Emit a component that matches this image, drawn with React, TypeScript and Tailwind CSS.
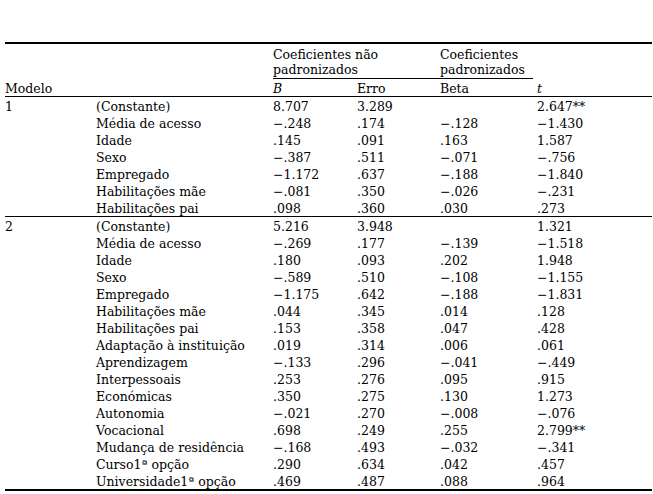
type Row = [string, string, string, string, string];

const modelOne: Row[] = [
  ['(Constante)', '8.707', '3.289', '', '2.647**'],
  ['Média de acesso', '−.248', '.174', '−.128', '−1.430'],
  ['Idade', '.145', '.091', '.163', '1.587'],
  ['Sexo', '−.387', '.511', '−.071', '−.756'],
  ['Empregado', '−1.172', '.637', '−.188', '−1.840'],
  ['Habilitações mãe', '−.081', '.350', '−.026', '−.231'],
  ['Habilitações pai', '.098', '.360', '.030', '.273'],
];

const modelTwo: Row[] = [
  ['(Constante)', '5.216', '3.948', '', '1.321'],
  ['Média de acesso', '−.269', '.177', '−.139', '−1.518'],
  ['Idade', '.180', '.093', '.202', '1.948'],
  ['Sexo', '−.589', '.510', '−.108', '−1.155'],
  ['Empregado', '−1.175', '.642', '−.188', '−1.831'],
  ['Habilitações mãe', '.044', '.345', '.014', '.128'],
  ['Habilitações pai', '.153', '.358', '.047', '.428'],
  ['Adaptação à instituição', '.019', '.314', '.006', '.061'],
  ['Aprendizagem', '−.133', '.296', '−.041', '−.449'],
  ['Interpessoais', '.253', '.276', '.095', '.915'],
  ['Económicas', '.350', '.275', '.130', '1.273'],
  ['Autonomia', '−.021', '.270', '−.008', '−.076'],
  ['Vocacional', '.698', '.249', '.255', '2.799**'],
  ['Mudança de residência', '−.168', '.493', '−.032', '−.341'],
  ['Curso1ª opção', '.290', '.634', '.042', '.457'],
  ['Universidade1ª opção', '.469', '.487', '.088', '.964'],
];

// single-line cell: 17px tall, text sits a little low like the scan
const cell = 'p-0 pt-[3px] leading-[14px] h-[17px] text-left font-normal align-top whitespace-nowrap';

function ModelRows({ id, rows }: { id: string; rows: Row[] }) {
  return (
    <>
      {rows.map((r, i) => (
        <tr key={id + i} className={i === 0 && id === '2' ? 'border-t border-black' : ''}>
          <td className={cell}>{i === 0 ? id : ''}</td>
          <td className={cell}>{r[0]}</td>
          <td className={cell}>{r[1]}</td>
          <td className={cell}>{r[2]}</td>
          <td className={cell}>{r[3]}</td>
          <td className={cell}>{r[4]}</td>
        </tr>
      ))}
    </>
  );
}

export default function App() {
  return (
    <div className="w-[653px] h-[494px] bg-white pt-[42px] pl-[5px] text-black font-['DejaVu_Serif',serif] text-[12.5px] overflow-hidden">
      <table className="w-[647px] table-fixed border-collapse border-t-2 border-b-2 border-black">
        <colgroup>
          <col className="w-[91px]" />
          <col className="w-[177px]" />
          <col className="w-[84px]" />
          <col className="w-[83px]" />
          <col className="w-[97px]" />
          <col />
        </colgroup>
        <thead>
          <tr>
            <th className="p-0" />
            <th className="p-0" />
            <th colSpan={2} className="p-0 text-left font-normal align-bottom">
              <div className="border-b border-black pt-[3px] pb-[1px] leading-[15px]">
                Coeficientes não
                <br />
                padronizados
              </div>
            </th>
            <th className="p-0 text-left font-normal align-bottom">
              <div className="border-b border-black pt-[3px] pb-[1px] leading-[15px] mr-[4px]">
                Coeficientes
                <br />
                padronizados
              </div>
            </th>
            <th className="p-0" />
          </tr>
          <tr className="border-b border-black">
            <th className={cell}>Modelo</th>
            <th className={cell} />
            <th className={cell + ' italic'}>B</th>
            <th className={cell}>Erro</th>
            <th className={cell}>Beta</th>
            <th className={cell + ' italic'}>t</th>
          </tr>
        </thead>
        <tbody>
          <ModelRows id="1" rows={modelOne} />
          <ModelRows id="2" rows={modelTwo} />
        </tbody>
      </table>
    </div>
  );
}
